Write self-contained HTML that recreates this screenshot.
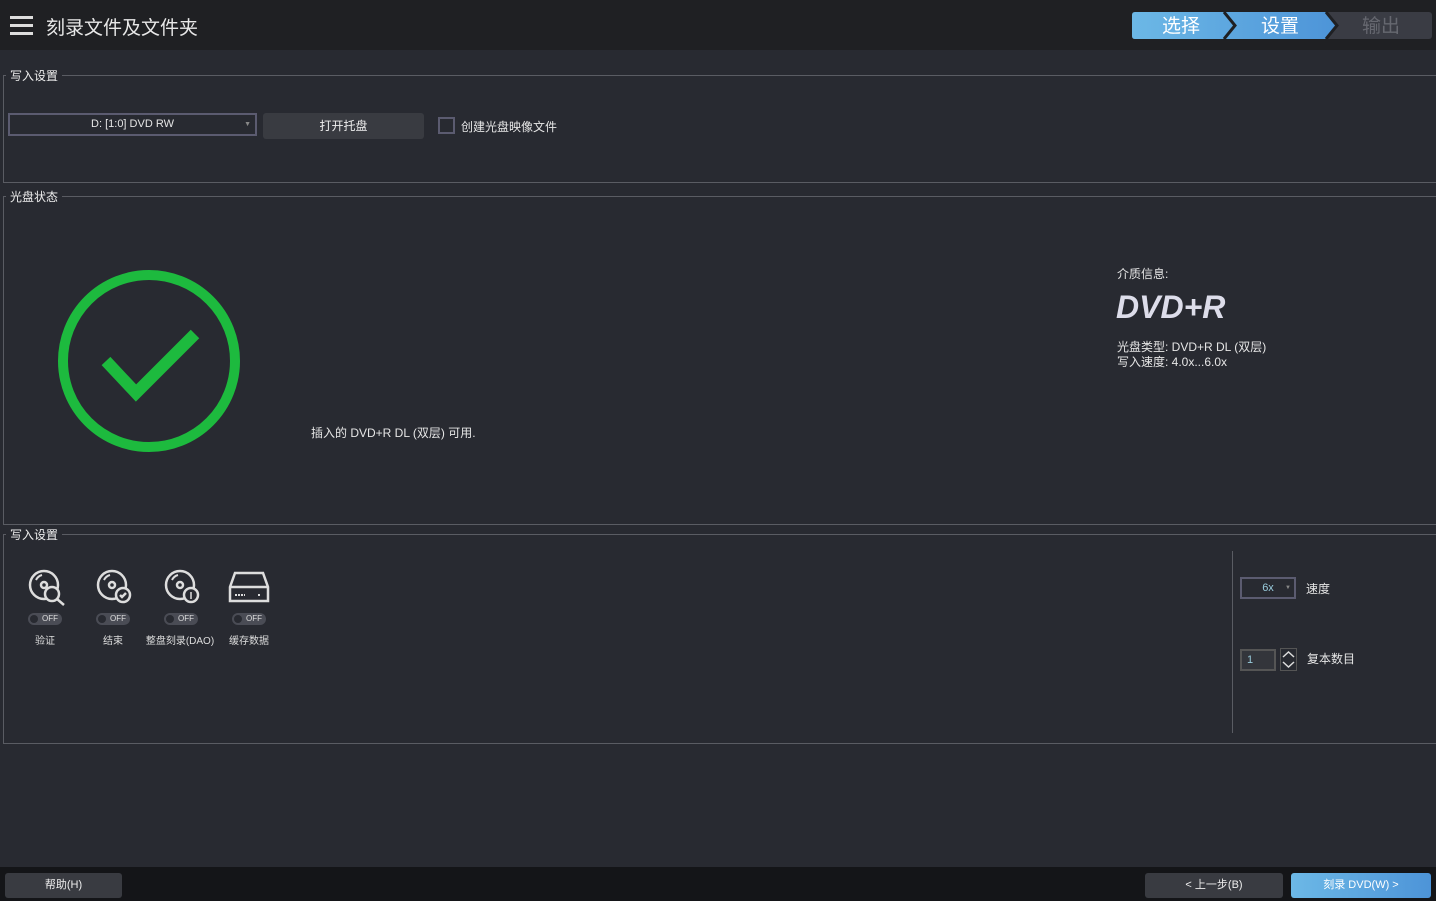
<!DOCTYPE html><html><head><meta charset="utf-8"><style>
*{box-sizing:border-box;margin:0;padding:0}
body{width:1436px;height:901px;background:#282a31;font-family:"Liberation Sans","Noto Sans CJK SC",sans-serif;color:#e6e6e6;position:relative;overflow:hidden;font-size:12px}
.a{position:absolute}
.hdr{left:0;top:0;width:1436px;height:50px;background:#1f2023}
.box{border:1px solid #5a5c63;border-right:none}
.lbl{background:#282a31;padding:0 4px;font-size:12px;color:#eee}
.tog{width:34px;height:12px;border-radius:6px;background:#4a4c55;font-size:8px;color:#ddd;line-height:12px;text-align:right;padding-right:4px}
.tog:before{content:"";position:absolute;left:2px;top:2px;width:8px;height:8px;border-radius:50%;background:#282a31}
.cap{font-size:10px;color:#ddd;text-align:center;width:80px}
.btn{background:#393b41;border-radius:3px;text-align:center;color:#eee}
</style></head><body>
<div class="a hdr"></div>
<div class="a" style="left:10px;top:16px;width:23px;height:3px;background:#ddd;box-shadow:0 8px 0 #ddd,0 16px 0 #ddd"></div>
<div class="a" style="left:46px;top:13px;font-size:19px;color:#e8e8e8">刻录文件及文件夹</div>
<svg class="a" style="left:1132px;top:12px" width="300" height="27">
<defs><linearGradient id="g" x1="0" x2="1"><stop offset="0" stop-color="#6cb8e6"/><stop offset="1" stop-color="#4d94d8"/></linearGradient></defs>
<rect x="0" y="0" width="300" height="27" rx="3" fill="#3a3c44"/>
<path d="M3 0H194L205 13.5L194 27H3Q0 27 0 24V3Q0 0 3 0Z" fill="url(#g)"/>
<path d="M92 0L103 13.5L92 27" stroke="#1f2023" stroke-width="3" fill="none"/>
<path d="M194 0L205 13.5L194 27" stroke="#1f2023" stroke-width="3" fill="none"/>
<text x="49" y="20" font-size="19" fill="#fff" text-anchor="middle" font-family="Noto Sans CJK SC">选择</text>
<text x="148" y="20" font-size="19" fill="#fff" text-anchor="middle" font-family="Noto Sans CJK SC">设置</text>
<text x="249" y="20" font-size="19" fill="#666870" text-anchor="middle" font-family="Noto Sans CJK SC">输出</text>
</svg>
<div class="a box" style="left:3px;top:75px;width:1433px;height:108px"></div>
<div class="a lbl" style="left:6px;top:67px">写入设置</div>
<div class="a" style="left:8px;top:113px;width:249px;height:23px;border:2px solid #5b5b70;text-align:center;line-height:19px;font-size:11px">D: [1:0] DVD RW<span style="position:absolute;right:4px;font-size:7px;color:#888">▼</span></div>
<div class="a btn" style="left:263px;top:113px;width:161px;height:26px;line-height:26px;font-size:12px">打开托盘</div>
<div class="a" style="left:438px;top:117px;width:17px;height:17px;border:2px solid #5b5b70"></div>
<div class="a" style="left:461px;top:118px;font-size:12px">创建光盘映像文件</div>
<div class="a box" style="left:3px;top:196px;width:1433px;height:329px"></div>
<div class="a lbl" style="left:6px;top:188px">光盘状态</div>
<svg class="a" style="left:56px;top:268px" width="186" height="186"><circle cx="93" cy="93" r="86" stroke="#1dba3e" stroke-width="10" fill="none"/><path d="M50 93L80 125L139 66" stroke="#1dba3e" stroke-width="12" fill="none"/></svg>
<div class="a" style="left:311px;top:424px;font-size:12px">插入的 DVD+R DL (双层) 可用.</div>
<div class="a" style="left:1117px;top:265px;font-size:12px">介质信息:</div>
<div class="a" style="left:1116px;top:289px;font-size:32px;font-weight:bold;font-style:italic;color:#ddddea">DVD+R</div>
<div class="a" style="left:1117px;top:340px;font-size:12px;line-height:15px">光盘类型: DVD+R DL (双层)<br>写入速度: 4.0x...6.0x</div>
<div class="a box" style="left:3px;top:534px;width:1433px;height:210px"></div>
<div class="a lbl" style="left:6px;top:526px">写入设置</div>
<svg class="a" style="left:28px;top:568px" width="245" height="40" fill="none" stroke="#ddd" stroke-width="2.5">
<circle cx="16" cy="17" r="14"/><circle cx="16" cy="17" r="3"/><path d="M8 12Q10 8 14 7" stroke-width="2"/><circle cx="24" cy="26" r="7" fill="#282a31"/><path d="M29 31L36 37"/>
<circle cx="84" cy="17" r="14"/><circle cx="84" cy="17" r="3"/><path d="M76 12Q78 8 82 7" stroke-width="2"/><circle cx="95" cy="27" r="7" fill="#282a31"/><path d="M92 27L94 29L98 25"/>
<circle cx="152" cy="17" r="14"/><circle cx="152" cy="17" r="3"/><path d="M144 12Q146 8 150 7" stroke-width="2"/><circle cx="163" cy="27" r="7" fill="#282a31"/><path d="M163 24V31" stroke-width="1.5"/>
<path d="M207 5H235L240 19V33H202V19Z"/><path d="M202 19H240"/><path d="M207 27H217M230 27H233" stroke-width="2" stroke-dasharray="2 1"/>
</svg>
<div class="a tog" style="left:28px;top:613px">OFF</div><div class="a cap" style="left:5px;top:632px">验证</div>
<div class="a tog" style="left:96px;top:613px">OFF</div><div class="a cap" style="left:73px;top:632px">结束</div>
<div class="a tog" style="left:164px;top:613px">OFF</div><div class="a cap" style="left:140px;top:632px">整盘刻录(DAO)</div>
<div class="a tog" style="left:232px;top:613px">OFF</div><div class="a cap" style="left:209px;top:632px">缓存数据</div>
<div class="a" style="left:1232px;top:551px;width:1px;height:182px;background:#5a5c63"></div>
<div class="a" style="left:1240px;top:577px;width:56px;height:22px;border:2px solid #5b5b70;text-align:center;line-height:18px;font-size:11px;color:#9cd">6x<span style="position:absolute;right:3px;font-size:6px;color:#888">▼</span></div>
<div class="a" style="left:1306px;top:580px;font-size:12px">速度</div>
<div class="a" style="left:1240px;top:649px;width:36px;height:22px;border:2px solid #555;background:#33353b;line-height:18px;padding-left:5px;font-size:11px;color:#9cd">1</div>
<svg class="a" style="left:1280px;top:648px" width="17" height="23"><rect x="0.5" y="0.5" width="16" height="22" fill="none" stroke="#555"/><path d="M3 9L8.5 4L14 9M3 14L8.5 19L14 14" stroke="#ddd" stroke-width="1.5" fill="none"/></svg>
<div class="a" style="left:1307px;top:650px;font-size:12px">复本数目</div>
<div class="a" style="left:0;top:867px;width:1436px;height:34px;background:#141518"></div>
<div class="a btn" style="left:5px;top:873px;width:117px;height:25px;line-height:25px;font-size:11px">帮助(H)</div>
<div class="a btn" style="left:1145px;top:873px;width:138px;height:25px;line-height:25px;font-size:11px">&lt; 上一步(B)</div>
<div class="a" style="left:1291px;top:873px;width:140px;height:25px;line-height:25px;font-size:11px;text-align:center;border-radius:3px;background:linear-gradient(90deg,#6cb8e6,#4d94d8);color:#fff">刻录 DVD(W) &gt;</div>
</body></html>
